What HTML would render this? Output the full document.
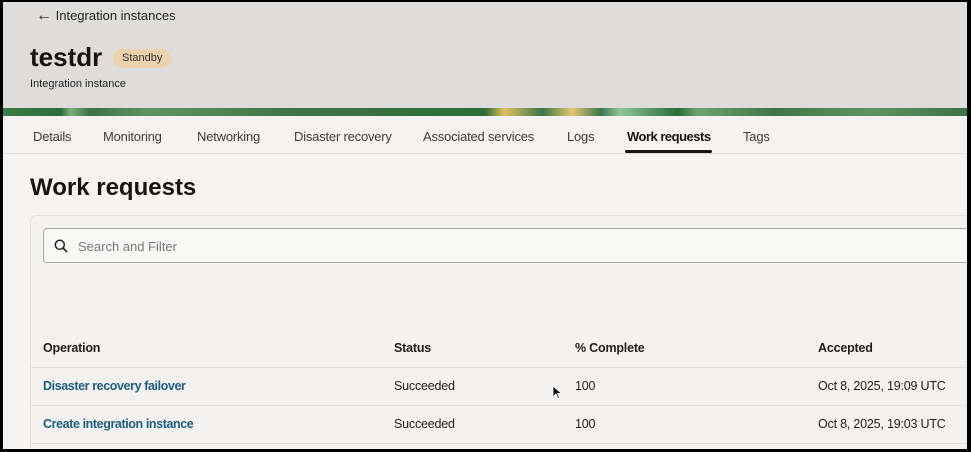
<!DOCTYPE html>
<html><head><style>
*{margin:0;padding:0;box-sizing:border-box}
body{width:971px;height:452px;overflow:hidden;background:#000;font-family:"Liberation Sans",sans-serif;position:relative}
.page{position:absolute;left:3px;top:2px;width:964px;height:447px;background:#f5f4f2;overflow:hidden}
.hdr{position:absolute;left:0;top:0;width:964px;height:106px;background:#dedddb}
.band{position:absolute;left:0;top:106px;width:964px;height:8px;background:linear-gradient(90deg,#3e7a4a 0,#2f6b3c 6%,#77b07d 7%,#3a7446 9%,#5d9466 15%,#3d7648 30%,#2e6a3a 50%,#e0c060 52%,#3d7648 56%,#e3c870 59%,#3d7648 62%,#8cc69a 64%,#2e6a3a 70%,#6aa474 72%,#3d7648 80%,#5d9466 90%,#3a7446 100%)}
.tabs{position:absolute;left:0;top:114px;width:964px;height:38px;background:#f4f3f1;border-bottom:1px solid #dddcd9}
.tab{position:absolute;top:13px;font-size:13px;color:#3c3b39;letter-spacing:-0.2px}
.t{position:absolute;white-space:nowrap}
.card{position:absolute;left:27px;top:213px;width:945px;height:250px;border:1px solid #e2e1de;border-radius:6px;background:#f3f2f0}
.search{position:absolute;left:40px;top:226px;width:930px;height:35px;border:1px solid #a9a8a5;border-radius:4px;background:#f8f8f7}
.line{position:absolute;left:28px;width:940px;height:1px;background:#dfdedb}
.cell{position:absolute;font-size:12.5px;color:#1f1e1d;letter-spacing:-0.2px;white-space:nowrap}
.lnk{color:#1f5d80;font-weight:bold;letter-spacing:-0.4px}
</style></head><body>
<div class="page">
<div class="hdr">
 <div class="t" style="left:33px;top:5px;font-size:13px;color:#222"><span style="font-size:16px">&#8592;</span>&nbsp;Integration instances</div>
 <div class="t" style="left:27px;top:40px;font-size:26px;font-weight:bold;color:#161513">testdr</div>
 <div class="t" style="left:110px;top:47px;height:19px;padding:0 9px;line-height:19px;font-size:11px;background:#ecd2ad;border-radius:10px;color:#333">Standby</div>
 <div class="t" style="left:27px;top:76px;font-size:11px;color:#222">Integration instance</div>
</div>
<div class="band"></div>
<div class="tabs">
 <div class="tab" style="left:30px">Details</div>
 <div class="tab" style="left:100px">Monitoring</div>
 <div class="tab" style="left:194px">Networking</div>
 <div class="tab" style="left:291px">Disaster recovery</div>
 <div class="tab" style="left:420px">Associated services</div>
 <div class="tab" style="left:564px">Logs</div>
 <div class="tab" style="left:624px;color:#161513;font-weight:bold;letter-spacing:-0.5px">Work requests</div>
 <div class="tab" style="left:740px">Tags</div>
 <div style="position:absolute;left:622px;top:34px;width:87px;height:3px;background:#161513;border-radius:2px"></div>
</div>
<div class="t" style="left:27px;top:172px;font-size:24px;font-weight:bold;color:#161513">Work requests</div>
<div class="card"></div>
<div class="search">
 <svg style="position:absolute;left:10px;top:10px" width="14" height="14" viewBox="0 0 14 14"><circle cx="5.8" cy="5.8" r="4.5" fill="none" stroke="#222" stroke-width="1.5"/><path d="M9 9l4 4" stroke="#222" stroke-width="1.6"/></svg>
 <div class="t" style="left:34px;top:10px;font-size:13px;color:#777">Search and Filter</div>
</div>
<div class="cell" style="left:40px;top:339px;font-weight:bold">Operation</div>
<div class="cell" style="left:391px;top:339px;font-weight:bold">Status</div>
<div class="cell" style="left:572px;top:339px;font-weight:bold">% Complete</div>
<div class="cell" style="left:815px;top:339px;font-weight:bold">Accepted</div>
<div class="line" style="top:365px"></div>
<div class="cell lnk" style="left:40px;top:377px">Disaster recovery failover</div>
<div class="cell" style="left:391px;top:377px">Succeeded</div>
<div class="cell" style="left:572px;top:377px">100</div>
<div class="cell" style="left:815px;top:377px">Oct 8, 2025, 19:09 UTC</div>
<div class="line" style="top:403px"></div>
<div class="cell lnk" style="left:40px;top:415px">Create integration instance</div>
<div class="cell" style="left:391px;top:415px">Succeeded</div>
<div class="cell" style="left:572px;top:415px">100</div>
<div class="cell" style="left:815px;top:415px">Oct 8, 2025, 19:03 UTC</div>
<div class="line" style="top:441px"></div>
<svg style="position:absolute;left:549px;top:383px" width="10" height="15" viewBox="0 0 10 15"><path d="M1 1v11l3-3 2 4.5 1.5-.7-2-4.3h4z" fill="#111" stroke="#fff" stroke-width=".8"/></svg>
</div>
</body></html>
